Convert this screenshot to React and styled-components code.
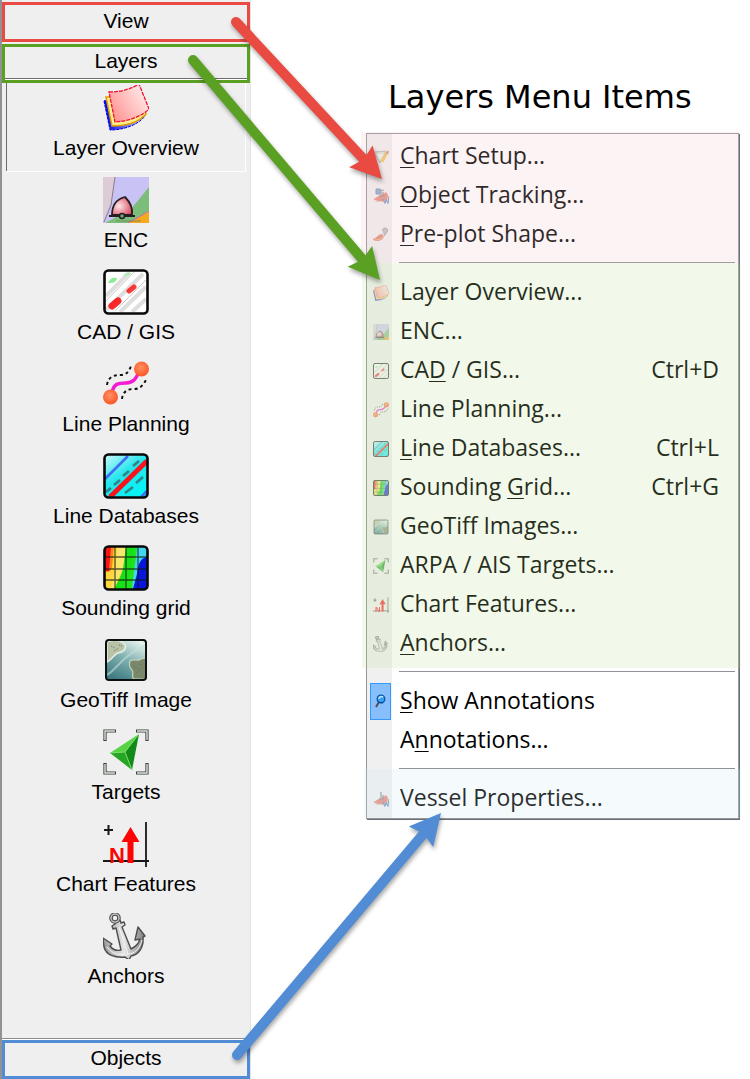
import React from "react";
import styled, { createGlobalStyle } from "styled-components";

const GlobalStyle = createGlobalStyle`
  * {
    box-sizing: border-box;
  }

  body {
    margin: 0;
    background: #ffffff;
    color: #000000;
  }

  button {
    margin: 0;
    padding: 0;
    border: none;
    background: none;
    color: inherit;
    font: inherit;
  }
`;

const Page = styled.div`
  position: relative;
  display: flex;
  min-height: 100vh;
  overflow: hidden;
`;

const Sidebar = styled.nav`
  display: flex;
  flex-direction: column;
  flex: 0 0 251px;
  padding-top: 2px;
  background: #efefef;
  border-left: 2px solid #929292;
  border-right: 1px solid #e2e2e2;
  font-family: "Liberation Sans", Arial, sans-serif;
  font-size: 21px;
  line-height: 24px;
`;

const GroupButton = styled.button`
  flex: none;
  height: ${({ $height }) => $height}px;
  margin-bottom: ${({ $gap }) => $gap || 0}px;
  padding-bottom: 3px;
  border: 3px solid ${({ $color }) => $color};
  text-align: center;

  &[aria-expanded="true"] {
    padding-bottom: 6px;
    box-shadow: inset 0 -1px 0 #ffffff, inset 0 -2px 0 #6c6c6c;
  }
`;

const ToolList = styled.div`
  display: flex;
  flex: 1;
  flex-direction: column;
  padding: 0 4px;
  border-bottom: 1px solid #8c8c8c;
`;

const ToolButton = styled.button`
  display: flex;
  flex-direction: column;
  align-items: center;
  gap: 5px;
  height: 92px;
  padding-top: 2px;
  box-shadow: ${({ $active }) =>
    $active
      ? "inset 0 -3px 0 #efefef, inset 0 -4px 0 #ffffff, inset 1px 0 0 #6c6c6c, inset -1px 0 0 #ffffff"
      : "none"};

  svg {
    width: 46px;
    height: 46px;
  }
`;

const Bottom = styled.div`
  display: flex;
  flex-direction: column;
  padding-top: 1px;
  background: #ffffff;

  button {
    background: #efefef;
  }
`;

const Main = styled.main`
  flex: 1;
  padding: 75px 11px 0 115px;
`;

const Title = styled.h1`
  margin: 0 0 14px 22px;
  font-family: "DejaVu Sans", Verdana, sans-serif;
  font-size: 32px;
  font-weight: 400;
  line-height: 44px;
  white-space: nowrap;
`;

const Menu = styled.div`
  border: 1px solid #979797;
  background: linear-gradient(to right, #f1f0f1 25px, #ffffff 25px);
  box-shadow: 1px 1px 0 #66707c;
  font-family: "Open Sans", "Segoe UI", sans-serif;
  font-size: 23px;
  line-height: 36px;
`;

const MenuGroup = styled.div`
  position: relative;
  padding-top: ${({ $first }) => ($first ? 3 : 10)}px;

  &::after {
    content: "";
    position: absolute;
    inset: ${({ $bleed }) => $bleed || "0"};
    background: ${({ $tint }) => $tint || "none"};
    pointer-events: none;
  }
`;

const Separator = styled.hr`
  height: 1px;
  margin: 8px 3px 0 32px;
  border: none;
  background: #8f9396;
`;

const MenuItem = styled.button`
  display: flex;
  align-items: center;
  width: 100%;
  height: 39px;
  padding-right: 19px;
  text-align: left;

  u {
    text-decoration-thickness: 1px;
    text-underline-offset: 3px;
  }
`;

const IconCell = styled.span`
  display: flex;
  align-items: center;
  justify-content: center;
  width: 21px;
  height: 37px;
  margin: 0 9px 0 3px;
  border: 1px solid ${({ $checked }) => ($checked ? "#3399ff" : "transparent")};
  background: ${({ $checked }) => ($checked ? "#86bffb" : "transparent")};

  svg {
    flex: none;
    width: 16px;
    height: 16px;
    opacity: ${({ $checked }) => ($checked ? 1 : 0.65)};
  }
`;

const Label = styled.span`
  flex: 1;
  padding-bottom: 3px;
  white-space: nowrap;
`;

const Shortcut = styled.span`
  padding-bottom: 3px;
  white-space: nowrap;
`;

const Overlay = styled.svg`
  position: absolute;
  top: 0;
  left: 0;
  pointer-events: none;
  filter: drop-shadow(1px 3px 2px rgba(0, 0, 0, 0.35));
`;

const LayersIcon = () => (
  <svg viewBox="0 0 46 46">
    <defs>
      <linearGradient id="sheet" x1="0" y1="0.8" x2="1" y2="0.2">
        <stop offset="0" stopColor="#ff9090" />
        <stop offset="1" stopColor="#fff0ee" />
      </linearGradient>
      <linearGradient id="sheetBlue" x1="0" x2="1">
        <stop offset="0" stopColor="#0000f0" />
        <stop offset="0.4" stopColor="#5050e8" />
        <stop offset="1" stopColor="#dadaf8" />
      </linearGradient>
    </defs>
    <path d="M1 16l6 29c12 0 27-4 35-14L33 5 4 15z" fill="url(#sheetBlue)" stroke="#0000e0" strokeDasharray="3 1" />
    <path d="M3 12l6 29c12 0 26-3 34-12L35 3 6 12z" fill="#ffef90" stroke="#dfa000" strokeWidth="1.5" />
    <path d="M6 7C18 7 28 4 36-1l10 25C38 32 25 36 12 37L9 22z" fill="url(#sheet)" stroke="#f01030" strokeWidth="1.3" strokeDasharray="4 1" />
  </svg>
);

const EncIcon = () => (
  <svg viewBox="0 0 46 46">
    <defs>
      <radialGradient id="buoy" cx="0.35" cy="0.5" r="0.7">
        <stop offset="0" stopColor="#ffe8e8" />
        <stop offset="1" stopColor="#d94862" />
      </radialGradient>
    </defs>
    <path d="M0 0h46v46H0z" fill="#c9c3f5" />
    <path d="M0 0h12L8 26 0 44z" fill="#ddcbd6" />
    <path d="M12 0L8 28 1 45" fill="none" stroke="#76696f" strokeWidth="0.8" />
    <path d="M46 10v36H2l26-14z" fill="#7bbd79" />
    <path d="M46 34v12H25l9-5z" fill="#f4a91f" />
    <path d="M25 46l11-6 10-6" fill="none" stroke="#d766b5" />
    <path d="M9 38C9 28 14 22 22 20c5 5 8 11 7 18z" fill="url(#buoy)" stroke="#251e22" strokeWidth="1.8" />
    <path d="M6 39h26" stroke="#251e22" strokeWidth="2" />
    <circle cx="19" cy="39" r="2.5" fill="#72a973" stroke="#251e22" strokeWidth="1.5" />
    <path d="M13 44h25" stroke="#67835a" strokeWidth="0.7" />
  </svg>
);

const CadIcon = () => (
  <svg viewBox="0 0 46 46">
    <rect x="1.5" y="1.5" width="43" height="43" rx="4" fill="#fff" />
    <path d="M3 27L27 3M3 41L40 5M17 43l26-25M29 43l14-13" stroke="#dedede" strokeWidth="4" />
    <path d="M3 32L31 3M12 42l31-31" stroke="#c8c8c8" strokeWidth="1" />
    <path d="M5 14c2-5 5-6 9-5-1 5-5 5-9 5z" fill="#8eea93" />
    <path d="M20 7c1-3 5-4 8-3-2 4-5 3-8 3z" fill="#b6ecb8" />
    <path d="M9 37l6-5" stroke="#fb1414" strokeWidth="7" strokeLinecap="round" opacity="0.9" />
    <path d="M26 22l5-4" stroke="#fb2424" strokeWidth="5" strokeLinecap="round" opacity="0.9" />
    <rect x="1.5" y="1.5" width="43" height="43" rx="4" fill="none" stroke="#080808" strokeWidth="2.6" />
  </svg>
);

const PlanningIcon = () => (
  <svg viewBox="0 0 46 46">
    <defs>
      <radialGradient id="ball" cx="0.45" cy="0.4" r="0.6">
        <stop offset="0" stopColor="#ff9162" />
        <stop offset="1" stopColor="#fb5629" />
      </radialGradient>
    </defs>
    <path d="M9 33c1-11 7-11 14-11 8 0 10-5 13-11" fill="none" stroke="#f41bd4" strokeWidth="3.5" />
    <path d="M4 24c1-8 7-10 13-10 7 0 9-4 11-9M19 38c1-8 6-10 12-10 7 0 10-5 13-11" fill="none" stroke="#111" strokeWidth="1.9" strokeDasharray="3 3" />
    <circle cx="7.5" cy="36" r="7.5" fill="url(#ball)" />
    <circle cx="38.5" cy="8" r="7.5" fill="url(#ball)" />
  </svg>
);

const DatabaseIcon = () => (
  <svg viewBox="0 0 46 46">
    <defs>
      <linearGradient id="water" x1="0" y1="0" x2="0.7" y2="1">
        <stop offset="0" stopColor="#d0fbfb" />
        <stop offset="0.5" stopColor="#25e5ec" />
        <stop offset="1" stopColor="#05f5f5" />
      </linearGradient>
    </defs>
    <rect x="1.5" y="1.5" width="43" height="43" rx="4" fill="url(#water)" />
    <path d="M2 26L25 3M38 44l6-6" stroke="#3c6df4" strokeWidth="2.6" />
    <path d="M7 44L44 8" stroke="#f8141c" strokeWidth="5" />
    <path d="M3 39l5-4M11 32l6-5M20 23l6-5M30 13l6-5M22 40l8-6M33 30l7-6" stroke="#2f8488" strokeWidth="2.6" />
    <rect x="1.5" y="1.5" width="43" height="43" rx="4" fill="none" stroke="#080808" strokeWidth="2.6" />
  </svg>
);

const GridIcon = () => (
  <svg viewBox="0 0 46 46">
    <rect x="1.5" y="1.5" width="43" height="43" rx="4" fill="#42d6f0" />
    <path d="M2 2h32c-1 12-3 22-5 42H2z" fill="#23e21b" />
    <path d="M2 2h24c-1 14-4 24-10 32L11 44H2z" fill="#ffd83d" />
    <path d="M14 2h10l-4 21-9 21-3-1 5-20z" fill="#f9e66c" />
    <path d="M23 2h9l-5 25-5 17h-9l7-20z" fill="#17df18" />
    <path d="M2 2h6v20c0 5-3 5-6 4z" fill="#fa1414" />
    <path d="M8 2h3L9 23l-3 3z" fill="#fb8620" />
    <path d="M44 12c-7 1-9 8-10 17l-4 15h14z" fill="#0717dc" />
    <path d="M12 2v42M23 2v42M35 2v42M2 12h42M2 24h42M2 35h42" stroke="#101810" strokeWidth="1.3" opacity="0.7" />
    <rect x="1.5" y="1.5" width="43" height="43" rx="4" fill="none" stroke="#080808" strokeWidth="2.6" />
  </svg>
);

const GeoTiffIcon = () => (
  <svg viewBox="0 0 46 46">
    <defs>
      <linearGradient id="sea" x1="0.8" y1="0" x2="0.3" y2="1">
        <stop offset="0" stopColor="#e9f4ee" />
        <stop offset="0.5" stopColor="#7fb0b0" />
        <stop offset="1" stopColor="#3f7c82" />
      </linearGradient>
    </defs>
    <rect x="3" y="3" width="40" height="40" rx="3" fill="url(#sea)" />
    <path d="M4 5c7-3 15-2 18 3 2 4-2 7-7 8-4 1-6 7-11 9z" fill="#b9c2a6" stroke="#e6eee2" strokeWidth="1.5" />
    <path d="M27 24c5-3 7 1 11-2l5-1v21H31c-4-3 1-5-2-9-3-3-3-6-2-9z" fill="#7a8768" stroke="#c3d4bd" strokeWidth="1.2" />
    <path d="M4 38c10-6 14-18 39-30" fill="none" stroke="#c3dfda" strokeWidth="2" opacity="0.6" />
    <path d="M8 9l4 2M11 14l5-3M16 8l3 1M30 29l5 3M33 36l6-5M36 27l4 1" stroke="#66725a" strokeWidth="1" strokeDasharray="1 1" />
    <rect x="3" y="3" width="40" height="40" rx="3" fill="none" stroke="#0c1010" strokeWidth="2" />
  </svg>
);

const TargetIcon = () => (
  <svg viewBox="0 0 46 46">
    <path d="M2 12V2h11M33 2h11v10M2 34v10h11M33 44h11V34" fill="none" stroke="#3c3c3c" strokeWidth="3.2" />
    <path d="M2 11V2h10M34 2h10v9M2 35v9h10M34 44h10v-9" fill="none" stroke="#dce8dc" strokeWidth="1.4" />
    <path d="M36 5L7 24l15-1z" fill="#58d345" />
    <path d="M36 5l-7 36-7-18z" fill="#138b18" />
    <path d="M7 24l15-1 7 18z" fill="#27a525" />
    <path d="M36 5L22 23L7 24M22 23l7 18" fill="none" stroke="#7be169" strokeWidth="0.9" />
  </svg>
);

const FeaturesIcon = () => (
  <svg viewBox="0 0 46 46">
    <path d="M0 40h46M43 1v46" stroke="#181818" strokeWidth="1.8" />
    <path d="M1 9h9M5.5 4v10" stroke="#181818" strokeWidth="2" />
    <path d="M27.5 6l9 15h-6v21h-6V21h-6z" fill="#fb0505" />
    <text x="6" y="42" fill="#fb0505" fontFamily="Liberation Sans, Arial, sans-serif" fontSize="22" fontWeight="700">
      N
    </text>
  </svg>
);

const AnchorIcon = () => (
  <svg viewBox="0 0 46 46">
    <defs>
      <linearGradient id="steel" x1="0" x2="1">
        <stop offset="0" stopColor="#9a9a9a" />
        <stop offset="0.5" stopColor="#e6e6e6" />
        <stop offset="1" stopColor="#7d7d7d" />
      </linearGradient>
    </defs>
    <path
      d="M13 9l4-2 1 3 3-1 1 3-3 2 9 22c4-2 8-6 9-10l-5 1 3-13 7 9-2 1c1 11-5 18-12 19l-2 4-4-3C12 45 3 42 1 34l-1-9 9 6-2 2c3 4 7 5 11 4L13 15l-3 1-1-3 3-2z"
      fill="url(#steel)"
      stroke="#4d4d4d"
      strokeWidth="1.4"
      strokeLinejoin="round"
    />
    <circle cx="12" cy="5" r="4" fill="none" stroke="#4d4d4d" strokeWidth="3.6" />
    <circle cx="12" cy="5" r="4" fill="none" stroke="#bcbcbc" strokeWidth="1.6" />
    <path d="M16 14l9 27M4 34c6 8 13 8 21 7 7 0 12-6 14-14" fill="none" stroke="#f4f4f4" strokeWidth="1" />
  </svg>
);

const ChartIcon = () => (
  <svg viewBox="0 0 16 16">
    <path d="M1 3l12-1-6 12z" fill="#c9dfbc" stroke="#8a8f85" strokeWidth="0.8" />
    <path d="M3 5h8L7 11z" fill="#f3f2e7" />
    <path d="M14 3L9 13" stroke="#efb51d" strokeWidth="3" />
    <path d="M15 2l-1 3" stroke="#c75b49" strokeWidth="2" />
  </svg>
);

const VesselIcon = ({ tracking }) => (
  <svg viewBox="0 0 16 16">
    <path d="M0 11c4-1 5-4 9-4l4-3 2 3-1 6H5z" fill="#e0604a" />
    <path d="M1 12c4 2 9 2 12-1l-1 3H4z" fill="#e6a070" />
    <path d="M6 8h5M8 1v6M10 4v4" stroke="#75625d" strokeWidth="1.2" />
    <path d="M10 11l2 4 1-3 2 3 1-7" fill="none" stroke="#3c6eae" strokeWidth="1.2" />
    {tracking && <path d="M3 1h4v5H3zM9 3l2-1" fill="#5494c9" stroke="#486f94" />}
  </svg>
);

const ShapeIcon = () => (
  <svg viewBox="0 0 16 16">
    <path d="M0 12c4-1 5-5 9-5l2 3c-2 4-7 5-11 3z" fill="#dc5e42" />
    <path d="M1 13c4 0 8-1 10-4" fill="none" stroke="#e9b05a" />
    <path d="M9 3c3-4 7-1 5 2l-3 4" fill="#aaa" stroke="#777" />
  </svg>
);

const PinIcon = () => (
  <svg viewBox="0 0 16 16">
    <path d="M6 8l-3 5" stroke="#554f4e" strokeWidth="2" />
    <circle cx="8" cy="5" r="3.8" fill="#3a9ff0" stroke="#0753a4" strokeWidth="1.3" />
    <path d="M6 5c0-2 2-3 4-2" fill="none" stroke="#c2eaff" strokeWidth="1.5" />
    <path d="M5 8l5 1" stroke="#074b94" strokeWidth="1.2" />
  </svg>
);

const tools = [
  { label: "Layer Overview", icon: <LayersIcon />, active: true },
  { label: "ENC", icon: <EncIcon /> },
  { label: "CAD / GIS", icon: <CadIcon /> },
  { label: "Line Planning", icon: <PlanningIcon /> },
  { label: "Line Databases", icon: <DatabaseIcon /> },
  { label: "Sounding grid", icon: <GridIcon /> },
  { label: "GeoTiff Image", icon: <GeoTiffIcon /> },
  { label: "Targets", icon: <TargetIcon /> },
  { label: "Chart Features", icon: <FeaturesIcon /> },
  { label: "Anchors", icon: <AnchorIcon /> },
];

// key is the index of the underlined access letter
const menuGroups = [
  {
    tint: "rgba(240, 195, 200, 0.2)",
    bleed: "-2px -1px 0 -6px",
    items: [
      { label: "Chart Setup...", key: 0, icon: <ChartIcon /> },
      { label: "Object Tracking...", key: 0, icon: <VesselIcon tracking /> },
      { label: "Pre-plot Shape...", key: 0, icon: <ShapeIcon /> },
    ],
  },
  {
    tint: "rgba(190, 225, 150, 0.2)",
    bleed: "0 -3px 4px -5px",
    items: [
      { label: "Layer Overview...", icon: <LayersIcon /> },
      { label: "ENC...", icon: <EncIcon /> },
      { label: "CAD / GIS...", key: 2, icon: <CadIcon />, shortcut: "Ctrl+D" },
      { label: "Line Planning...", icon: <PlanningIcon /> },
      { label: "Line Databases...", key: 0, icon: <DatabaseIcon />, shortcut: "Ctrl+L" },
      { label: "Sounding Grid...", key: 9, icon: <GridIcon />, shortcut: "Ctrl+G" },
      { label: "GeoTiff Images...", icon: <GeoTiffIcon /> },
      { label: "ARPA / AIS Targets...", icon: <TargetIcon /> },
      { label: "Chart Features...", icon: <FeaturesIcon /> },
      { label: "Anchors...", key: 0, icon: <AnchorIcon /> },
    ],
  },
  {
    items: [
      { label: "Show Annotations", key: 0, icon: <PinIcon />, checked: true },
      { label: "Annotations...", key: 1 },
    ],
  },
  {
    tint: "rgba(205, 230, 240, 0.2)",
    bleed: "0 -3px 0 -3px",
    items: [{ label: "Vessel Properties...", icon: <VesselIcon /> }],
  },
];

const arrows = [
  { color: "#e94b43", from: [236, 22], to: [382, 179] },
  { color: "#5aa023", from: [193, 60], to: [380, 280] },
  { color: "#528cd5", from: [237, 1055], to: [441, 813] },
];

const Arrow = ({ color, from, to }) => {
  const dx = to[0] - from[0];
  const dy = to[1] - from[1];
  const length = Math.hypot(dx, dy);
  const angle = (Math.atan2(dy, dx) * 180) / Math.PI;

  return (
    <g transform={`translate(${from[0]} ${from[1]}) rotate(${angle})`}>
      <path d={`M0 0H${length - 24}`} stroke={color} strokeWidth="10" strokeLinecap="round" />
      <path d={`M${length} 0l-31-16 4 16-4 16z`} fill={color} />
    </g>
  );
};

const AccessLabel = ({ text, index }) => {
  if (index === undefined) return <Label>{text}</Label>;
  return (
    <Label>
      {text.slice(0, index)}
      <u>{text[index]}</u>
      {text.slice(index + 1)}
    </Label>
  );
};

const App = () => {
  return (
    <>
      <GlobalStyle />
      <Page>
        <Sidebar>
          <GroupButton $color="#e94b43" $height={40} $gap={2} aria-expanded="false">
            View
          </GroupButton>
          <GroupButton $color="#5aa023" $height={39} aria-expanded="true">
            Layers
          </GroupButton>
          <ToolList>
            {tools.map((tool) => (
              <ToolButton key={tool.label} $active={tool.active}>
                {tool.icon}
                {tool.label}
              </ToolButton>
            ))}
          </ToolList>
          <Bottom>
            <GroupButton $color="#528cd5" $height={39} aria-expanded="false">
              Objects
            </GroupButton>
          </Bottom>
        </Sidebar>
        <Main>
          <Title>Layers Menu Items</Title>
          <Menu role="menu">
            {menuGroups.map((group, i) => (
              <MenuGroup key={i} $first={i === 0} $tint={group.tint} $bleed={group.bleed}>
                {group.items.map((item) => (
                  <MenuItem
                    key={item.label}
                    role={item.checked ? "menuitemcheckbox" : "menuitem"}
                    aria-checked={item.checked}
                  >
                    <IconCell $checked={item.checked}>{item.icon}</IconCell>
                    <AccessLabel text={item.label} index={item.key} />
                    {item.shortcut && <Shortcut>{item.shortcut}</Shortcut>}
                  </MenuItem>
                ))}
                {i < menuGroups.length - 1 && <Separator />}
              </MenuGroup>
            ))}
          </Menu>
        </Main>
        <Overlay width="750" height="1079" aria-hidden="true">
          {arrows.map((arrow) => (
            <Arrow key={arrow.color} {...arrow} />
          ))}
        </Overlay>
      </Page>
    </>
  );
};

export default App;
